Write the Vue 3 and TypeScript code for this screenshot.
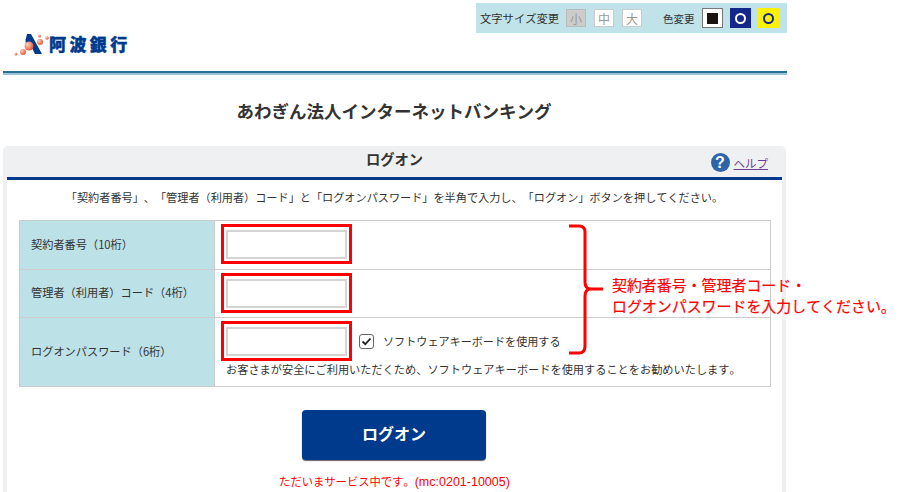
<script setup lang="ts">
type Field = {
  label: string
  software?: boolean
}

const fields: Field[] = [
  { label: '契約者番号（10桁）' },
  { label: '管理者（利用者）コード（4桁）' },
  { label: 'ログオンパスワード（6桁）', software: true },
]

const sizes = ['小', '中', '大']
</script>

<template>
  <div class="page">
    <header class="site-header">
      <div class="logo">
        <svg class="logo__mark" width="36" height="26" viewBox="0 0 36 26">
          <defs>
            <radialGradient id="ball" cx="35%" cy="35%" r="75%">
              <stop offset="0" stop-color="#fbd2b8" />
              <stop offset="1" stop-color="#e8452a" />
            </radialGradient>
          </defs>
          <path d="M15 2 L19 2 L30 22 L23 22 L18 12 Q16 8 14 13 L13.500 8 Z" fill="#003a8c" />
          <circle cx="17" cy="14" r="4.500" fill="url(#ball)" />
          <circle cx="28" cy="10" r="3" fill="url(#ball)" />
          <circle cx="27.500" cy="4" r="1.500" fill="url(#ball)" />
          <circle cx="35" cy="6" r="1.800" fill="url(#ball)" />
          <circle cx="11" cy="20" r="3" fill="url(#ball)" />
          <circle cx="4" cy="22" r="1.500" fill="url(#ball)" />
        </svg>
        <span class="logo__text">阿波銀行</span>
      </div>
      <div class="tools">
        <span class="tools__label">文字サイズ変更</span>
        <span
          v-for="(size, index) in sizes"
          :key="size"
          class="size-btn"
          :class="{ 'is-current': index === 0 }"
        >{{ size }}</span>
        <span class="tools__label tools__label--color">色変更</span>
        <span class="color-btn color-btn--black"><i></i></span>
        <span class="color-btn color-btn--navy"><i></i></span>
        <span class="color-btn color-btn--yellow"><i></i></span>
      </div>
    </header>

    <h1 class="title">あわぎん法人インターネットバンキング</h1>

    <section class="card">
      <div class="card__head">
        <h2>ログオン</h2>
        <a class="help">
          <span class="help__icon">?</span>
          <span class="help__text">ヘルプ</span>
        </a>
      </div>
      <p class="lead">「契約者番号」、「管理者（利用者）コード」と「ログオンパスワード」を半角で入力し、「ログオン」ボタンを押してください。</p>

      <div class="form-table">
        <div v-for="field in fields" :key="field.label" class="form-row">
          <div class="form-row__label">{{ field.label }}</div>
          <div class="form-row__body">
            <div class="form-row__line">
              <div class="input-mark"><input class="input" type="password" /></div>
              <label v-if="field.software" class="check">
                <span class="check__box">
                  <svg width="11" height="9" viewBox="0 0 11 9">
                    <path d="M1.500 4.500 L4.300 7.200 L9.500 1.500" fill="none" stroke="#222" stroke-width="1.800" />
                  </svg>
                </span>
                ソフトウェアキーボードを使用する
              </label>
            </div>
            <p v-if="field.software" class="note">お客さまが安全にご利用いただくため、ソフトウェアキーボードを使用することをお勧めいたします。</p>
          </div>
        </div>
      </div>

      <button class="logon" type="button"><span>ログオン</span></button>
      <p class="status">ただいまサービス中です。<span class="status__code">(mc:0201-10005)</span></p>
    </section>

    <svg class="bracket" width="38" height="134" viewBox="0 0 38 134">
      <path d="M1 2 H11 Q17 2 17 8 V58 Q17 65 23 65 H35 M23 65 Q17 65 17 72 V122 Q17 129 11 129 H1" fill="none" stroke="#f00" stroke-width="3" />
    </svg>
    <p class="callout">契約者番号・管理者コード・<br />ログオンパスワードを入力してください。</p>
  </div>
</template>

<style>
html,
body {
  margin: 0;
  background: #fff;
}
</style>

<style scoped>
.page {
  position: relative;
  width: 900px;
  height: 492px;
  overflow: hidden;
  font-family: "Noto Sans CJK JP", sans-serif;
  font-size: 11.100px;
  color: #333;
  text-spacing-trim: space-all;
  font-kerning: none;
}

.site-header {
  display: flex;
  justify-content: space-between;
  align-items: flex-start;
  box-sizing: border-box;
  width: 784px;
  height: 75px;
  margin-left: 3px;
  padding-top: 3px;
  background: linear-gradient(#2f6f96 0 2px, #9cc3da 2px 4px) no-repeat left bottom / 100% 4px;
}

.logo {
  display: flex;
  align-items: center;
  margin: 27px 0 0 9px;
}

.logo__mark {
  margin-top: 2px;
  overflow: visible;
}

.logo__text {
  margin-left: 1px;
  font-size: 17px;
  line-height: 24px;
  font-weight: 900;
  letter-spacing: 3.400px;
  color: #003a8c;
  -webkit-text-stroke: 0.400px #003a8c;
}

.tools {
  display: flex;
  align-items: center;
  box-sizing: border-box;
  width: 311px;
  height: 30px;
  padding-left: 4px;
  background: #bfe3e8;
}

.tools__label {
  margin-right: 7px;
  font-size: 11.300px;
  white-space: nowrap;
}

.tools__label--color {
  margin: 0 7px 0 21px;
  font-size: 10.500px;
}

.size-btn {
  display: flex;
  align-items: center;
  justify-content: center;
  box-sizing: border-box;
  width: 20px;
  height: 18px;
  margin-right: 8px;
  border: 1px solid #ccc;
  background: #fff;
  font-size: 12px;
  color: #999;
}

.size-btn:nth-of-type(4) {
  margin-right: 0;
}

.size-btn.is-current {
  background: #ccc;
  border-color: #bbb;
}

.color-btn {
  display: flex;
  align-items: center;
  justify-content: center;
  box-sizing: border-box;
  width: 21px;
  height: 20px;
  margin-right: 7px;
}

.color-btn--black {
  background: #fff;
  border: 1px solid #777;
}

.color-btn--black i {
  width: 11px;
  height: 11px;
  background: #1a1311;
}

.color-btn--navy {
  background: #13288a;
}

.color-btn--navy i,
.color-btn--yellow i {
  box-sizing: border-box;
  width: 11px;
  height: 11px;
  border: 2.500px solid #fff;
  border-radius: 50%;
}

.color-btn--yellow {
  background: #fff200;
}

.color-btn--yellow i {
  border-color: #13288a;
}

.title {
  margin: 24px 0 0;
  width: 788px;
  font-size: 17.500px;
  line-height: 24px;
  font-weight: 700;
  text-align: center;
}

.card {
  box-sizing: border-box;
  width: 783px;
  height: 360px;
  margin: 23px 0 0 3px;
  border: solid #eff0f2;
  border-width: 0 4px;
  border-radius: 5px 5px 0 0;
  text-align: center;
}

.card__head {
  position: relative;
  box-sizing: border-box;
  height: 34px;
  background: #eff0f2;
  border-bottom: 3px solid #003a8c;
}

.card__head h2 {
  margin: 0;
  padding-top: 2px;
  font-size: 14.300px;
  line-height: 22px;
  font-weight: 700;
}

.help {
  position: absolute;
  top: 7px;
  right: 14px;
  display: flex;
  align-items: center;
  gap: 4px;
}

.help__icon {
  width: 19px;
  height: 19px;
  border-radius: 50%;
  background: #2f65a7;
  font-family: "Liberation Sans", sans-serif;
  font-size: 16px;
  line-height: 19px;
  font-weight: 700;
  color: #fff;
}

.help__text {
  font-size: 11.500px;
  line-height: 16px;
  color: #6a3f98;
  text-decoration: underline;
}

.lead {
  margin: 9px 0 15px;
  font-size: 11.150px;
  line-height: 16px;
}

.form-table {
  margin: 0 11px 0 12px;
  border: solid #ccc;
  border-width: 1px 1px 0;
  text-align: left;
}

.form-row {
  display: grid;
  grid-template-columns: 195px 1fr;
  border-bottom: 1px solid #ccc;
}

.form-row:nth-child(1) {
  height: 48px;
}

.form-row:nth-child(2) {
  height: 47px;
}

.form-row:nth-child(3) {
  height: 68px;
}

.form-row__label {
  display: flex;
  align-items: center;
  padding: 0 0 3px 11px;
  background: #bce1e7;
  border-right: 1px solid #ccc;
  font-size: 11.200px;
}

.form-row__body {
  padding: 3px 0 0 6px;
}

.form-row__line {
  display: flex;
  align-items: center;
}

.input-mark {
  box-sizing: border-box;
  width: 131px;
  height: 40px;
  padding: 3px 2px 2px;
  border: 3px solid #f00;
}

.input {
  display: block;
  box-sizing: border-box;
  width: 121px;
  height: 29px;
  padding: 0;
  border: 2px solid #d4d4d4;
  outline: 0;
  background: #fff;
}

.check {
  display: flex;
  align-items: center;
  margin-left: 7px;
  white-space: nowrap;
}

.check__box {
  display: flex;
  align-items: center;
  justify-content: center;
  box-sizing: border-box;
  width: 15px;
  height: 15px;
  margin-right: 9px;
  border: 1px solid #666;
  border-radius: 3px;
}

.note {
  margin: 0 0 0 5px;
  font-size: 11.200px;
  line-height: 16px;
}

.logon {
  display: block;
  width: 184px;
  height: 50px;
  margin: 23px 0 0 295px;
  padding: 0 0 4px;
  border: 0;
  border-radius: 4px;
  background: #003a8c;
  box-shadow: 0 1px 1px #666;
  font-family: inherit;
  font-size: 16px;
  font-weight: 700;
  color: #fff;
}

.status {
  margin: 13px 0 0;
  font-size: 11.300px;
  line-height: 16px;
  color: #f00;
}

.status__code {
  font-family: "Liberation Sans", sans-serif;
  font-size: 12.500px;
}

.bracket {
  position: absolute;
  left: 568px;
  top: 224px;
}

.callout {
  position: absolute;
  left: 612px;
  top: 274px;
  margin: 0;
  font-size: 14.950px;
  line-height: 21px;
  color: #f00;
  white-space: nowrap;
  -webkit-text-stroke: 0.200px #f00;
}
</style>
